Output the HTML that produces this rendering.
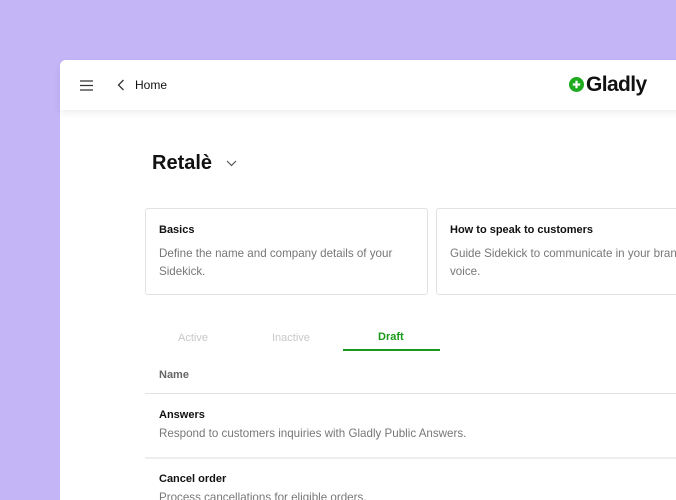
<!DOCTYPE html>
<html><head><style>
*{margin:0;padding:0;box-sizing:border-box}
html,body{width:676px;height:500px;overflow:hidden}
body{background:#c4b5f7;position:relative;font-family:"Liberation Sans",sans-serif}
.win{position:absolute;left:60px;top:60px;width:640px;height:440px;background:#fff;border-radius:6px 0 0 0}
.hdr{position:absolute;left:0;top:0;width:100%;height:50px;background:#fff;box-shadow:0 3px 8px rgba(0,0,0,0.07);border-radius:6px 0 0 0}
.t{position:absolute;white-space:nowrap}
.card{position:absolute;top:148px;height:87px;border:1px solid #e2e2e2;border-radius:3px;background:#fff}
.h{font-size:11px;font-weight:bold;color:#111}
.d{font-size:11.6px;color:#777;line-height:18px}
.line{position:absolute;left:85px;width:560px;height:1px;background:#e3e3e3}
</style></head><body>
<div class="win">
<div class="hdr">
<svg style="position:absolute;left:20px;top:20px" width="14" height="11" viewBox="0 0 14 11"><path d="M0 1H13M0 5.5H13M0 10H13" stroke="#333" stroke-width="1.2"/></svg>
<svg style="position:absolute;left:57px;top:19px" width="8" height="12" viewBox="0 0 8 12"><path d="M6.5 1L1.5 6L6.5 11" stroke="#333" stroke-width="1.3" fill="none"/></svg>
<div class="t" style="left:75px;top:18px;font-size:12px;color:#111">Home</div>
<svg style="position:absolute;left:509px;top:17px" width="15" height="15" viewBox="0 0 15 15"><circle cx="7.5" cy="7.5" r="7.5" fill="#1faa1f"/><path d="M7.5 3.8V11.2M3.8 7.5H11.2" stroke="#fff" stroke-width="2.2"/></svg>
<div class="t" style="left:526px;top:13px;font-size:21px;font-weight:bold;color:#111;letter-spacing:-0.6px">Gladly</div>
</div>
<div class="t" style="left:92px;top:92px;font-size:20px;font-weight:bold;color:#111">Retalè</div>
<svg style="position:absolute;left:166px;top:100px" width="11" height="7" viewBox="0 0 11 7"><path d="M1 1L5.5 5.5L10 1" stroke="#555" stroke-width="1.2" fill="none"/></svg>
<div class="card" style="left:85px;width:283px">
<div class="t h" style="left:13px;top:15px">Basics</div>
<div class="t d" style="left:13px;top:36px">Define the name and company details of your<br>Sidekick.</div>
</div>
<div class="card" style="left:376px;width:300px">
<div class="t h" style="left:13px;top:15px">How to speak to customers</div>
<div class="t d" style="left:13px;top:36px">Guide Sidekick to communicate in your brand<br>voice.</div>
</div>
<div class="t" style="left:118px;top:272px;font-size:11px;color:#c8c8c8">Active</div>
<div class="t" style="left:212px;top:272px;font-size:11px;color:#c8c8c8">Inactive</div>
<div class="t" style="left:318px;top:271px;font-size:11px;font-weight:bold;color:#1a9a1a">Draft</div>
<div style="position:absolute;left:283px;top:289px;width:97px;height:2px;background:#1a9a1a"></div>
<div class="t" style="left:99px;top:309px;font-size:11px;font-weight:bold;color:#666">Name</div>
<div class="line" style="top:333px"></div>
<div class="t h" style="left:99px;top:349px">Answers</div>
<div class="t d" style="left:99px;top:365px">Respond to customers inquiries with Gladly Public Answers.</div>
<div class="line" style="top:397px;height:2px;background:#eee"></div>
<div class="t h" style="left:99px;top:413px">Cancel order</div>
<div class="t d" style="left:99px;top:429px">Process cancellations for eligible orders.</div>
</div>
</body></html>
